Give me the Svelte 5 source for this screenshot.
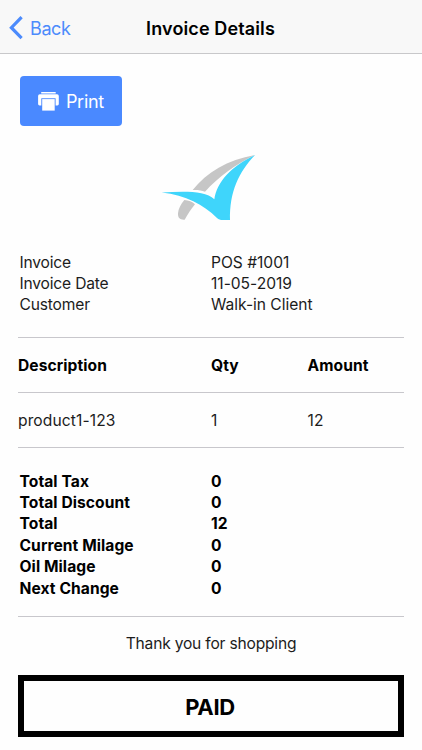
<script lang="ts">
  const details = [
    { label: "Invoice", value: "POS #1001" },
    { label: "Invoice Date", value: "11-05-2019" },
    { label: "Customer", value: "Walk-in Client" },
  ];

  const items = [{ description: "product1-123", qty: 1, amount: 12 }];

  const totals = [
    { label: "Total Tax", value: 0 },
    { label: "Total Discount", value: 0 },
    { label: "Total", value: 12 },
    { label: "Current Milage", value: 0 },
    { label: "Oil Milage", value: 0 },
    { label: "Next Change", value: 0 },
  ];
</script>

<header>
  <button class="back">
    <svg width="14" height="24" viewBox="0 0 14 24">
      <path d="M12.600 1.200 2.400 11.700l10.200 10.500" />
    </svg>
    <span>Back</span>
  </button>
  <h1>Invoice Details</h1>
</header>

<main>
  <button class="print">
    <svg width="21" height="19" viewBox="0 0 21 19">
      <path d="M3.200 0h14.500v1.500H3.200z" />
      <path
        d="M2 2.200h17a1.800 1.800 0 0 1 1.800 1.800v8a1.400 1.400 0 0 1-1.400 1.400h-1.800V6.300H3.300v7.100H1.500a1.400 1.400 0 0 1-1.400-1.400V4A1.800 1.800 0 0 1 2 2.200z"
      />
      <path d="M4.200 7.100h12.500v11.500H4.200z" />
    </svg>
    <span>Print</span>
  </button>

  <svg class="logo" width="96" height="68" viewBox="33 30 288 204">
    <path
      class="grey"
      d="M315 30C232 44 170 83 128 135c14-1 26 1 37 5C205 97 255 58 315 30z"
    />
    <path
      class="grey"
      d="M103 165c13 1 24 5 32 13-12 15-22 30-31 46-14 1-21-5-20-19 1-13 8-27 19-40z"
    />
    <path
      class="blue"
      d="M35 142.500c62-4 130-7 158 20C201 110 244 64 315 30 266 81 238 142 240 225h-22c-7 0-12-1-17-6C160 178 108 151 35 142.500z"
    />
  </svg>

  <div class="details info">
    {#each details as row}
      <span>{row.label}</span>
      <span>{row.value}</span>
    {/each}
  </div>

  <div class="row heading">
    <span>Description</span>
    <span>Qty</span>
    <span>Amount</span>
  </div>
  {#each items as item}
    <div class="row">
      <span>{item.description}</span>
      <span>{item.qty}</span>
      <span>{item.amount}</span>
    </div>
  {/each}

  <div class="details totals">
    {#each totals as row}
      <span>{row.label}</span>
      <span>{row.value}</span>
    {/each}
  </div>

  <p class="thanks">Thank you for shopping</p>
  <div class="status">PAID</div>
</main>

<style>
  :global(body) {
    background: #fefefe;
    color: #1c1c1c;
    font-family: Inter, "Liberation Sans", sans-serif;
    font-size: 15.6px;
  }

  button {
    border: none;
    font: inherit;
    padding: 0;
  }

  header {
    align-items: center;
    background: #f8f8f8;
    border-bottom: 1px solid #c8c8ca;
    box-sizing: border-box;
    display: grid;
    grid-template-columns: 100px 1fr 101px;
    height: 54px;
    padding-top: 3px;
  }

  .back {
    align-items: center;
    background: none;
    color: #4c8bfc;
    display: flex;
    font-size: 18px;
    gap: 7px;
    letter-spacing: -0.4px;
    padding-left: 9px;
  }

  .back path {
    fill: none;
    stroke: #4c8bfc;
    stroke-width: 3.2;
  }

  h1 {
    color: #000;
    font-size: 18px;
    font-weight: 600;
    letter-spacing: 0.12px;
    margin: 0;
    text-align: center;
    white-space: nowrap;
  }

  main {
    padding: 22px 18px 12px;
  }

  .print {
    align-items: center;
    background: #4a89ff;
    border-radius: 4px;
    color: #fff;
    display: flex;
    font-size: 18px;
    gap: 7px;
    height: 50px;
    justify-content: center;
    letter-spacing: -0.3px;
    margin-left: 2.4px;
    padding-right: 1px;
    width: 102px;
  }

  .print path {
    fill: #fff;
  }

  .logo {
    display: block;
    margin: 29px 0 0 143px;
  }

  .logo .grey {
    fill: #c6c6c6;
  }

  .logo .blue {
    fill: #3fd5fb;
  }

  .details {
    display: grid;
    grid-auto-rows: 21.4px;
    grid-template-columns: 191.5px 1fr;
    line-height: 21.4px;
    padding-left: 1.5px;
  }

  .info {
    letter-spacing: -0.18px;
    padding-bottom: 21.3px;
    padding-top: 28.5px;
  }

  .info span:nth-child(even) {
    letter-spacing: -0.02px;
  }

  .row {
    align-items: center;
    border-top: 1px solid #c8c7cc;
    box-sizing: border-box;
    display: grid;
    grid-template-columns: 193px 96.5px 1fr;
    height: 55px;
    letter-spacing: 0.1px;
    padding-top: 2px;
  }

  .heading,
  .totals {
    color: #000;
    font-weight: 700;
    letter-spacing: 0.07px;
  }

  .totals {
    border-bottom: 1px solid #c8c7cc;
    border-top: 1px solid #c8c7cc;
    padding-bottom: 16.8px;
    padding-top: 22.6px;
  }

  .thanks {
    letter-spacing: -0.2px;
    line-height: 20px;
    margin: 17px 0 21.6px;
    text-align: center;
  }

  .status {
    border: 6px solid #000;
    color: #000;
    font-size: 22px;
    font-weight: 700;
    letter-spacing: -0.3px;
    line-height: 48px;
    padding: 2px 2px 0 0;
    text-align: center;
  }
</style>
